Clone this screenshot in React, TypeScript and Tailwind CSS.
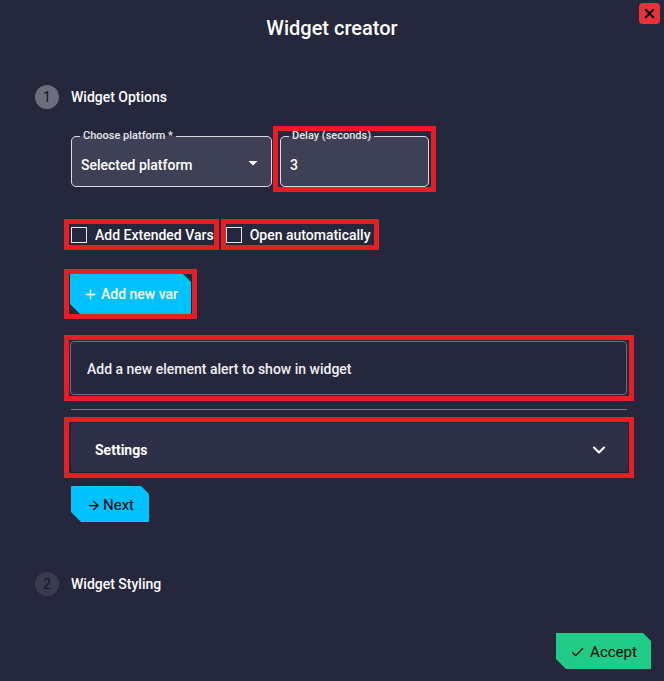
import { ChevronDown, Plus, ArrowRight, Check, X } from 'lucide-react';

// corner-cut shape shared by the action buttons
const cut = '[clip-path:polygon(0_0,calc(100%_-_8px)_0,100%_8px,100%_100%,10px_100%,0_calc(100%_-_10px))]';

function Step({ n, label, active }: { n: number; label: string; active?: boolean }) {
  return (
    <div className="flex items-center gap-[12px] pl-[35px]">
      <div
        className={`flex h-[24px] w-[24px] items-center justify-center rounded-full pt-[1px] text-[14px] text-[#15161f] ${
          active ? 'bg-[#6c6e80]' : 'bg-[#3a3c51]'
        }`}
      >
        {n}
      </div>
      <span className="text-[14px] font-medium">{label}</span>
    </div>
  );
}

function Field({ label, width, children }: { label: string; width: string; children: React.ReactNode }) {
  return (
    <fieldset className={`${width} rounded-[5px] border border-[#d9dae0] bg-[#3e4055] px-[8px]`}>
      <legend className="px-[3px] text-[11px] font-medium leading-[10px] text-[#e6e6ea]">{label}</legend>
      <div className="flex h-[45px] items-center pl-[1px] pt-[4px] text-[14px] font-medium">{children}</div>
    </fieldset>
  );
}

function CheckItem({ label, className }: { label: string; className?: string }) {
  return (
    <label className={`flex h-[31px] items-center gap-[8px] border-[5px] border-[#e81e25] ${className ?? ''}`}>
      <span className="h-[16px] w-[16px] border-[1.5px] border-[#e8e8ec]" />
      <span className="pt-[2px] text-[14px] font-medium">{label}</span>
    </label>
  );
}

export default function App() {
  return (
    <div className="relative h-[681px] w-[664px] overflow-hidden bg-[#25273d] font-['Roboto',sans-serif] text-white">
      <button className="absolute right-[4px] top-[3px] flex h-[21px] w-[21px] items-center justify-center rounded-[4px] bg-[#ea3138]">
        <X size={15} strokeWidth={3.2} color="#000" />
      </button>

      <h1 className="pt-[15px] text-center text-[20px] font-medium leading-[26px]">Widget creator</h1>

      <div className="mt-[44px]">
        <Step n={1} label="Widget Options" active />
      </div>

      <div className="mt-[17px] pl-[64px] pr-[30px]">
        <div className="flex items-start">
          <div className="ml-[7px] mt-[5px]">
            <Field label="Choose platform *" width="w-[201px]">
              <div className="flex w-full items-center justify-between">
                <span>Selected platform</span>
                <svg width="24" height="24" viewBox="0 0 24 24" className="-mr-[2px] -mt-[6px]">
                  <path d="M7.5 10l4.5 4.5 4.5-4.5z" fill="#fff" />
                </svg>
              </div>
            </Field>
          </div>
          <div className="ml-[1px] border-[5px] border-[#e81e25] px-[2px]">
            <Field label="Delay (seconds)" width="w-[149px]">
              <span>3</span>
            </Field>
          </div>
        </div>

        <div className="mt-[27px] flex gap-[2px]">
          <CheckItem label="Add Extended Vars" className="pl-[2px] pr-[0px]" />
          <CheckItem label="Open automatically" className="pr-[3px]" />
        </div>

        <div className="mt-[19px] inline-flex border-[5px] border-[#e81e25] pl-[1px] pr-[1px]">
          <button className={`flex h-[40px] w-[121px] items-center justify-center gap-[3px] bg-[#00c2ff] text-[14px] font-medium ${cut}`}>
            <Plus size={15} strokeWidth={2.2} />
            Add new var
          </button>
        </div>

        <div className="mt-[16px] border-[5px] border-[#e81e25] pl-[1px] pr-[2px] py-[1px]">
          <div className="flex h-[54px] items-center rounded-[4px] border border-[#6b6d81] pl-[16px] pt-[2px] text-[14px] font-medium text-[#f0f0f2]">
            Add a new element alert to show in widget
          </div>
        </div>

        <div className="ml-[7px] mr-[7px] mt-[8px] h-px bg-[#787a8b]" />

        <div className="mt-[7px] border-[5px] border-[#e81e25] pl-[2px] pr-[1px] py-[1px]">
          <div className="flex h-[49px] items-center justify-between rounded-[4px] bg-[#2e3047] pl-[24px] pr-[19px] shadow-[0_1px_2px_rgba(0,0,0,0.35)]">
            <span className="pt-[6px] text-[14px] font-bold">Settings</span>
            <ChevronDown size={20} strokeWidth={2.5} className="mt-[5px]" />
          </div>
        </div>

        <button className={`ml-[7px] mt-[8px] flex h-[36px] w-[78px] items-center justify-center gap-[2px] bg-[#00c2ff] pt-[3px] text-[15px] text-black ${cut}`}>
          <ArrowRight size={15} strokeWidth={2} />
          Next
        </button>
      </div>

      <div className="mt-[50px]">
        <Step n={2} label="Widget Styling" />
      </div>

      <div className="mt-[37px] flex justify-end pr-[13px]">
        <button className={`flex h-[36px] w-[95px] items-center justify-center gap-[5px] bg-[#1fcb86] pt-[3px] text-[15px] text-black ${cut}`}>
          <Check size={15} strokeWidth={2} />
          Accept
        </button>
      </div>
    </div>
  );
}
